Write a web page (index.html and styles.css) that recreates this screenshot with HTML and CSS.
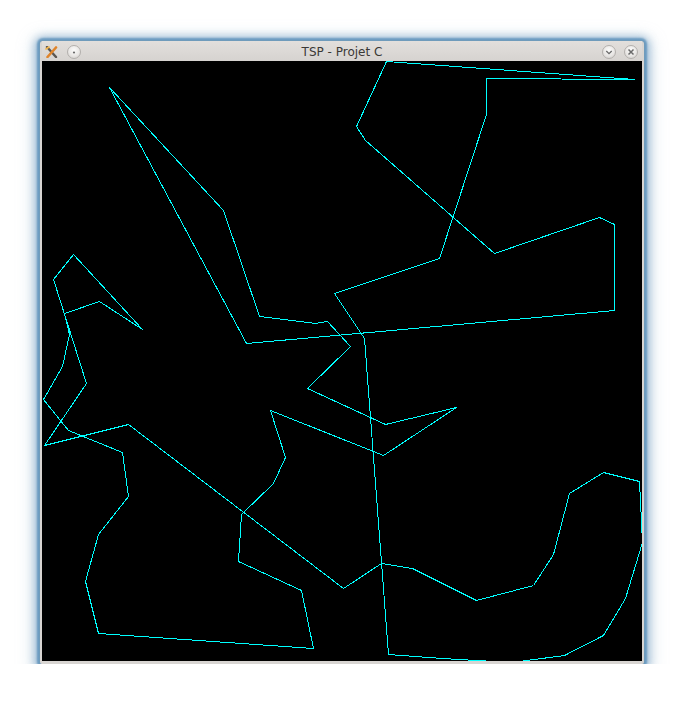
FILE: index.html
```html
<!DOCTYPE html>
<html>
<head>
<meta charset="utf-8">
<title>TSP - Projet C</title>
<link rel="stylesheet" href="styles.css">
</head>
<body>
<div class="window">
  <div class="titlebar">
    <div class="tb-left">
      <svg class="app-icon" width="13" height="12" viewBox="0 0 13 12">
        <path d="M2 1 L11 11" stroke="#5a5652" stroke-width="2.4" stroke-linecap="round"/>
        <path d="M11 1.5 L2.5 11" stroke="#e0842a" stroke-width="2.6" stroke-linecap="round"/>
        <path d="M1 3 L4 1" stroke="#f3b54a" stroke-width="1.6" stroke-linecap="round"/>
      </svg>
      <span class="btn">
        <svg width="14" height="14" viewBox="0 0 14 14"><circle cx="7" cy="7.5" r="1.1" fill="#6a6a6a"/></svg>
      </span>
    </div>
    <div class="title">TSP - Projet C</div>
    <div class="tb-right">
      <span class="btn">
        <svg width="14" height="14" viewBox="0 0 14 14"><path d="M4.3 6 L7 8.7 L9.7 6" fill="none" stroke="#6a6a6a" stroke-width="1.3"/></svg>
      </span>
      <span class="btn">
        <svg width="14" height="14" viewBox="0 0 14 14"><path d="M4.5 4.5 L9.5 9.5 M9.5 4.5 L4.5 9.5" fill="none" stroke="#6a6a6a" stroke-width="1.5"/></svg>
      </span>
    </div>
  </div>
  <div class="canvas">
    <svg width="600" height="600" viewBox="0 0 600 600" shape-rendering="crispEdges">
      <polygon class="tour" transform="translate(0.5 0.5)" points="67,26 204,282 572,249 572,163 557,156 452,192 323,79 314,65 344,0 592,18 444,17 444,53 397,197 292,232 322,277 346,593 400,597 469,601 522,594 561,574 583,537 600,481 597,420 561,411 527,432 511,493 491,524 434,539 370,507 339,502 301,527 86,363 2,384 44,322 11,218 31,193 100,268 57,240 22,252 27,273 20,305 1,338 26,369 80,391 86,435 56,473 43,520 56,572 271,587 259,529 196,500 199,453 231,422 243,396 228,349 341,394 414,346 343,363 265,327 308,285 285,260 273,262 217,255 181,149"/>
    </svg>
  </div>
</div>
</body>
</html>
```

FILE: styles.css
```css
html, body {
  margin: 0;
  padding: 0;
  background: #ffffff;
}

body {
  padding: 41px 0 0 40px;
}

.window {
  width: 600px;
  padding: 0 2px 3px 2px;
  background: #d8d5d2;
  border-radius: 3px 3px 2px 2px;
  box-shadow:
    0 0 0 1px #6f9bbb,
    0 0 2px 3px rgba(100, 150, 190, 0.9),
    0 1px 8px 5px rgba(115, 160, 195, 0.65),
    0 4px 16px 8px rgba(150, 180, 205, 0.35);
}

.titlebar {
  height: 20px;
  display: grid;
  grid-template-columns: 1fr auto 1fr;
  align-items: center;
  background: linear-gradient(#e2dfdc, #d6d3d0);
}

.tb-left {
  display: flex;
  align-items: center;
  gap: 9px;
  padding-left: 3px;
}

.tb-right {
  display: flex;
  align-items: center;
  justify-content: flex-end;
  gap: 8px;
  padding-right: 4px;
}

.app-icon {
  display: block;
}

.btn {
  width: 14px;
  height: 14px;
  border-radius: 50%;
  box-sizing: border-box;
  border: 1px solid #b3b0ad;
  background: radial-gradient(circle at 50% 35%, #fbfbfa 0%, #e9e7e5 55%, #cfccc9 100%);
  display: flex;
  align-items: center;
  justify-content: center;
}

.btn svg {
  display: block;
  margin: -1px;
}

.title {
  font-family: "DejaVu Sans", sans-serif;
  font-size: 12px;
  color: #3a3836;
  line-height: 20px;
  padding-top: 1px;
}

.canvas {
  width: 600px;
  height: 600px;
  background: #000000;
  overflow: hidden;
}

.canvas svg {
  display: block;
}

.tour {
  fill: none;
  stroke: #00ffff;
  stroke-width: 1;
}
```
